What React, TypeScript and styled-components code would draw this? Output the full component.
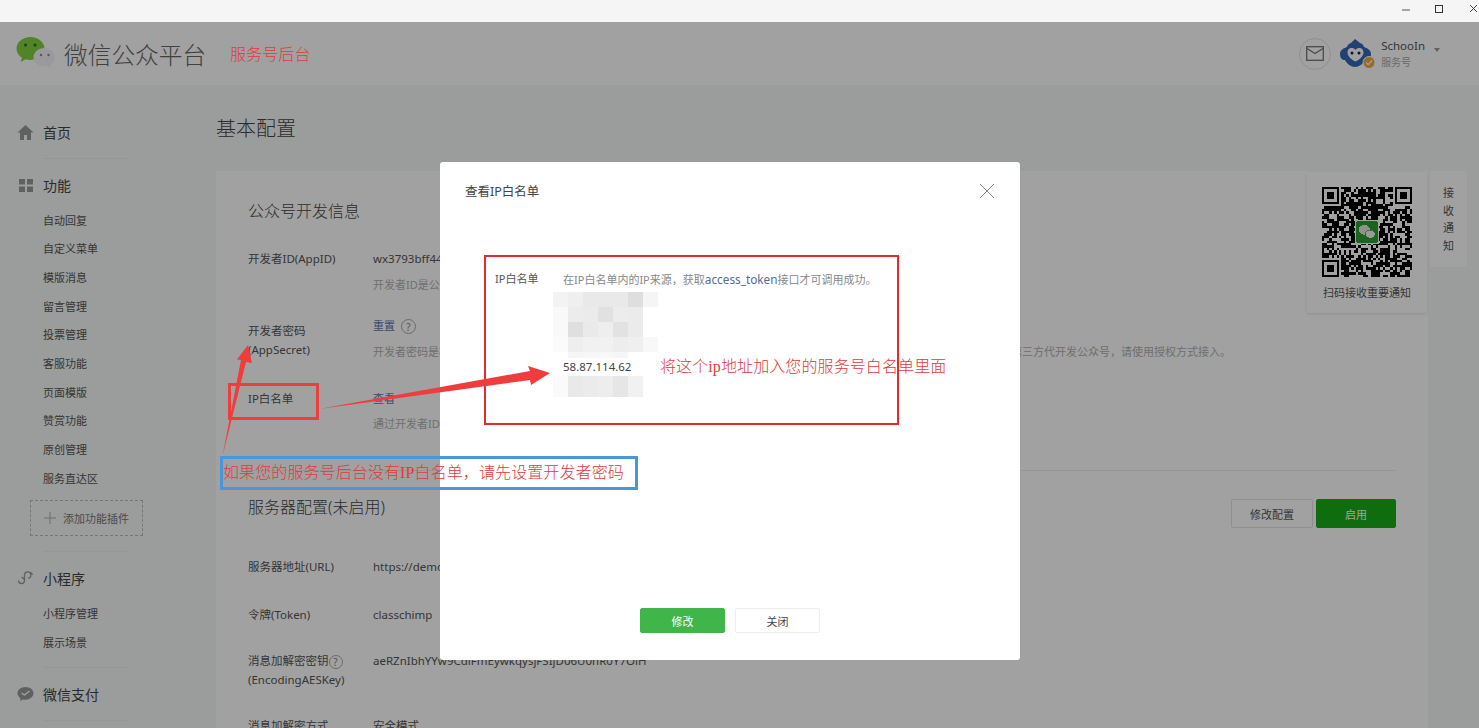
import React, { useMemo } from 'react';
import styled, { createGlobalStyle } from 'styled-components';

const SANS = `"Noto Sans", "Noto Sans CJK SC", sans-serif`;

const GlobalStyle = createGlobalStyle`
  html, body {
    margin: 0;
    height: 100%;
    overflow: hidden;
    background: #f6f8f7;
    font-family: ${SANS};
  }
  * { box-sizing: border-box; }
`;

const Page = styled.div`
  position: relative;
  width: 1479px;
  height: 728px;
  overflow: hidden;
`;

const TitleBar = styled.div`
  height: 22px;
  background: #f5f5f5;
  display: flex;
  justify-content: flex-end;
  align-items: center;
  color: #333;
`;

const WinIcon = styled.svg<{ $left: number; $right?: number }>`
  width: 12px;
  height: 12px;
  margin: -5px ${p => p.$right ?? 0}px 0 ${p => p.$left}px;
`;

const Header = styled.header`
  height: 63px;
  background: #fff;
  display: flex;
  align-items: center;
  padding: 0 39px 0 16px;
`;

const LogoText = styled.div`
  margin-left: 7px;
  font-size: 23.7px;
  font-weight: 300;
  color: #666;
`;

const HeaderRight = styled.div`
  margin-left: auto;
  display: flex;
  align-items: center;
`;

const MailButton = styled.div`
  width: 32px;
  height: 32px;
  border-radius: 50%;
  border: 1px solid #e4e4e4;
  display: flex;
  align-items: center;
  justify-content: center;
  margin-right: 9px;
`;

const Account = styled.div`
  margin-left: 5px;
  line-height: 16px;
`;

const AccountName = styled.div`
  font-size: 11.5px;
  color: #555;
`;

const AccountType = styled.div`
  font-size: 10px;
  color: #aaa;
`;

const Caret = styled.div`
  width: 0;
  height: 0;
  border: 3px solid transparent;
  border-top: 4px solid #999;
  margin: 0 0 5px 9px;
`;

const Body = styled.div`
  display: flex;
  height: 643px;
`;

const Sidebar = styled.nav`
  width: 216px;
  flex: none;
  padding-top: 33px;
`;

const NavTitle = styled.div`
  height: 28px;
  display: flex;
  align-items: center;
  gap: 9px;
  padding-left: 17px;
  font-size: 14px;
  color: #444;
`;

const NavIcon = styled.svg`
  width: 17px;
  height: 17px;
  flex: none;
`;

const NavList = styled.div<{ $top: number }>`
  margin-top: ${p => p.$top}px;
`;

const NavItem = styled.div`
  height: 28.7px;
  line-height: 28.7px;
  padding-left: 43px;
  font-size: 11px;
  color: #555;
`;

const NavDivider = styled.div<{ $top: number }>`
  width: 86px;
  height: 1px;
  margin: ${p => p.$top}px 0 12px 43px;
  background: #eeeeee;
`;

const AddPlugin = styled.div`
  width: 113px;
  height: 36px;
  margin: 6px 0 0 30px;
  border: 1px dashed #bbb;
  display: flex;
  align-items: center;
  gap: 7px;
  padding-left: 13px;
  font-size: 11px;
  color: #777;
`;

const Main = styled.main`
  position: relative;
  flex: 1;
  padding: 30px 51px 0 0;
  min-width: 0;
`;

const PageTitle = styled.h1`
  margin: 0 0 28px;
  font-size: 20px;
  font-weight: 300;
  line-height: 28px;
  color: #444;
`;

const Card = styled.section`
  height: 560px;
  background: #fff;
  padding: 28px 32px 0;
  overflow: hidden;
`;

const SectionTitle = styled.h2`
  margin: 0 0 26px;
  font-size: 16px;
  font-weight: 300;
  line-height: 24px;
  color: #444;
`;

const Row = styled.div<{ $h: number }>`
  display: flex;
  height: ${p => p.$h}px;
  font-size: 11.5px;
  line-height: 19px;
`;

const Label = styled.div<{ $top?: number }>`
  width: 125px;
  flex: none;
  margin-top: ${p => p.$top ?? 0}px;
  color: #555;
`;

const ValueCol = styled.div`
  min-width: 0;
  white-space: nowrap;
`;

const Value = styled.div`
  color: #555;
  font-size: 11.5px;
`;

const SecretLink = styled.span`
  color: #5d78a8;
  font-size: 11px;
`;

const Desc = styled.div<{ $gap?: number }>`
  margin-top: ${p => p.$gap ?? 7}px;
  color: #b0b0b0;
  font-size: 11px;
`;

const HelpMark = styled.span<{ $size: number }>`
  display: inline-flex;
  align-items: center;
  justify-content: center;
  vertical-align: middle;
  width: ${p => p.$size}px;
  height: ${p => p.$size}px;
  margin-left: 6px;
  border: 1px solid #aaa;
  border-radius: 50%;
  font-size: 10px;
  line-height: 1;
  color: #888;
`;

const InlineHelp = styled(HelpMark)`
  margin-left: 0;
`;

const CardDivider = styled.hr`
  margin: 0 0 28px;
  border: 0;
  border-top: 1px solid #eee;
`;

const SectionHead = styled.div`
  display: flex;
  justify-content: space-between;
  align-items: flex-start;
  height: 58px;
`;

const ServerTitle = styled(SectionTitle)`
  line-height: 17px;
  margin: 0;
`;

const HeadActions = styled.div`
  display: flex;
  gap: 3px;
`;

const PageButton = styled.button<{ $primary?: boolean }>`
  width: ${p => (p.$primary ? 80 : 82)}px;
  height: 29px;
  padding: 0;
  border-radius: 2px;
  border: 1px solid ${p => (p.$primary ? '#1aad19' : '#e2e2e2')};
  background: ${p => (p.$primary ? '#1aad19' : '#fff')};
  color: ${p => (p.$primary ? '#fff' : '#555')};
  font-family: ${SANS};
  font-size: 11px;
`;

const QrPanel = styled.aside`
  position: absolute;
  left: 1091px;
  top: 87px;
  width: 120px;
  height: 141px;
  background: #fff;
  border-radius: 2px;
  box-shadow: 0 1px 3px rgba(0, 0, 0, 0.12);
  display: flex;
  flex-direction: column;
  align-items: center;
  padding-top: 15px;
  font-size: 11px;
  color: #555;
`;

const QrCaption = styled.div`
  margin-top: 6px;
  line-height: 20px;
`;

const NoticeTab = styled.aside`
  position: absolute;
  left: 1214px;
  top: 86px;
  width: 37px;
  height: 96px;
  background: #fff;
  border-radius: 2px;
  padding-top: 13px;
  text-align: center;
  font-size: 11px;
  line-height: 17.5px;
  color: #555;
`;

const Overlay = styled.div`
  position: absolute;
  inset: 22px 0 0 0;
  background: rgba(0, 0, 0, 0.37);
  display: flex;
  justify-content: center;
  align-items: flex-start;
  padding: 140px 19px 0 0;
`;

const Dialog = styled.div`
  width: 580px;
  height: 498px;
  background: #fff;
  border-radius: 3px;
  display: flex;
  flex-direction: column;
`;

const DialogHead = styled.div`
  height: 58px;
  display: flex;
  align-items: center;
  justify-content: space-between;
  padding: 0 25px;
  font-size: 12.5px;
  color: #444;
`;

const DialogTitle = styled.div`
  margin-top: -2px;
`;

const DialogBody = styled.div`
  display: flex;
  padding: 49px 0 0 55px;
  font-size: 11px;
  line-height: 20px;
`;

const DialogLabel = styled.div`
  width: 68px;
  flex: none;
  color: #555;
`;

const Tip = styled.div`
  color: #888;
  white-space: nowrap;
`;

const TipLink = styled.span`
  color: #576b95;
  font-size: 11.8px;
`;

const Mosaic = styled.div<{ $h: number; $top: number }>`
  display: grid;
  grid-template-columns: repeat(7, 15px);
  grid-auto-rows: ${p => p.$h}px;
  margin: ${p => p.$top}px 0 0 -10px;
`;

const MosaicCell = styled.div<{ $c: string }>`
  background: ${p => p.$c};
`;

const IpText = styled.div`
  font-size: 11.5px;
  line-height: 18px;
  color: #444;
`;

const DialogFooter = styled.div`
  margin-top: auto;
  padding-bottom: 27px;
  display: flex;
  justify-content: center;
  gap: 10px;
`;

const DialogButton = styled.button<{ $primary?: boolean }>`
  width: 85px;
  height: 25px;
  padding: 0;
  border-radius: 2px;
  border: 1px solid ${p => (p.$primary ? '#3fb54a' : '#eeeeee')};
  background: ${p => (p.$primary ? '#3fb54a' : '#fff')};
  color: ${p => (p.$primary ? '#fff' : '#444')};
  font-family: ${SANS};
  font-size: 11px;
`;

/* things drawn on top of the screenshot afterwards */
const Markup = styled.div`
  position: absolute;
  inset: 0;
  pointer-events: none;
`;

const MarkBox = styled.div<{ $x: number; $y: number; $w: number; $h: number; $b: number; $c: string }>`
  position: absolute;
  left: ${p => p.$x}px;
  top: ${p => p.$y}px;
  width: ${p => p.$w}px;
  height: ${p => p.$h}px;
  border: ${p => p.$b}px solid ${p => p.$c};
`;

const MarkText = styled.div<{ $x: number; $y: number }>`
  position: absolute;
  left: ${p => p.$x}px;
  top: ${p => p.$y}px;
  font-family: "Liberation Serif", "Noto Sans CJK SC", serif;
  font-size: 16px;
  font-weight: 300;
  line-height: 20px;
  letter-spacing: 0.1px;
  color: #e03a3c;
  white-space: nowrap;
`;

const ArrowLayer = styled.svg`
  position: absolute;
  left: 0;
  top: 0;
`;

const navGroup = ['自动回复', '自定义菜单', '模版消息', '留言管理', '投票管理', '客服功能', '页面模版', '赞赏功能', '原创管理', '服务直达区'];

const mosaicTop = [
  ['#f3f3f3', '#efefef', '#e9e9e9', '#e9e9e9', '#e9e9e9', '#dedede', '#f5f5f5'],
  ['#f9f9f9', '#ececec', '#ebebeb', '#e1e1e1', '#ececec', '#ebebeb', '#ffffff'],
  ['#f9f9f9', '#dfdfdf', '#eaeaea', '#eeeeee', '#e2e2e2', '#ebebeb', '#ffffff'],
  ['#fbfbfb', '#eeeeee', '#f1f1f1', '#f1f1f1', '#ededed', '#efefef', '#f8f8f8'],
];

const mosaicFade = [['#ffffff', '#f5f5f5', '#f7f7f7', '#f8f8f8', '#f6f6f6', '#ffffff', '#ffffff']];

const mosaicBottom = [['#fafafa', '#e9e9e9', '#ebebeb', '#ededed', '#e6e6e6', '#f1f1f1', '#ffffff']];

function MosaicBlock({ rows, h, top }: { rows: string[][]; h: number; top: number }) {
  return (
    <Mosaic $h={h} $top={top}>
      {rows.flat().map((c, i) => (
        <MosaicCell key={i} $c={c} />
      ))}
    </Mosaic>
  );
}

function QrCode() {
  // modules are made up, only the look of a QR code matters here
  const d = useMemo(() => {
    const n = 37;
    let seed = 20417;
    const next = () => {
      seed = (seed * 1103515245 + 12345) & 0x7fffffff;
      return ((seed >> 16) & 7) < 5;
    };
    const inFinder = (x: number, y: number) => (x < 8 && y < 8) || (x > n - 9 && y < 8) || (x < 8 && y > n - 9);
    const finder = (ox: number, oy: number) =>
      `M${ox} ${oy}h7v7h-7zM${ox + 1} ${oy + 1}v5h5v-5zM${ox + 2} ${oy + 2}h3v3h-3z`;
    let out = finder(0, 0) + finder(n - 7, 0) + finder(0, n - 7);
    for (let y = 0; y < n; y++) {
      for (let x = 0; x < n; x++) {
        const bit = next();
        if (!inFinder(x, y) && bit) out += `M${x} ${y}h1v1h-1z`;
      }
    }
    return out;
  }, []);

  return (
    <svg width="90" height="90" viewBox="0 0 37 37" shapeRendering="crispEdges">
      <path d={d} fill="#000" fillRule="evenodd" />
      <rect x="13.5" y="13.5" width="10" height="10" fill="#fff" />
      <rect x="14" y="14" width="9" height="9" rx="1" fill="#2f9e34" />
      <ellipse cx="17.4" cy="17.6" rx="2.3" ry="2" fill="#dfe8dc" />
      <ellipse cx="19.9" cy="19.4" rx="2" ry="1.7" fill="#f3f6f1" stroke="#2f9e34" strokeWidth="0.3" />
    </svg>
  );
}

export default function App() {
  return (
    <Page>
      <GlobalStyle />
      <TitleBar>
        <WinIcon $left={0} viewBox="0 0 12 12">
          <path d="M0 7h8" stroke="#555" fill="none" />
        </WinIcon>
        <WinIcon $left={19} viewBox="0 0 12 12">
          <rect x="2.5" y="2.5" width="7" height="7" stroke="#333" fill="none" />
        </WinIcon>
        <WinIcon $left={24} $right={-2} viewBox="0 0 12 12">
          <path d="M1 2l7 7M8 2l-7 7" stroke="#444" fill="none" />
        </WinIcon>
      </TitleBar>

      <Header>
        <svg width="41" height="36" viewBox="0 0 41 36">
          <path d="M14.5 1C6.7 1 .5 6.2.5 12.6c0 3.8 2.2 7.1 5.5 9.2L4.6 26l5.1-2.7c1.500.4 3.100.6 4.800.6 7.800 0 14-5.200 14-11.300S22.300 1 14.500 1z" fill="#80d040" />
          <circle cx="9.500" cy="9" r="1.500" fill="#2f6d15" />
          <circle cx="19" cy="9" r="1.500" fill="#2f6d15" />
          <path d="M28.500 12c-6 0-11 4.100-11 9.300s5 9.300 11 9.300c1.200 0 2.400-.2 3.400-.500l3.500 2.700-.8-3.800c2.600-1.700 4.200-4.500 4.200-7.700 0-5.200-4.900-9.300-10.300-9.300z" fill="#f4f4fa" />
          <circle cx="25" cy="19" r="1.200" fill="#888" />
          <circle cx="32.500" cy="19" r="1.200" fill="#888" />
        </svg>
        <LogoText>微信公众平台</LogoText>
        <HeaderRight>
          <MailButton>
            <svg width="18" height="15" viewBox="0 0 18 15" fill="none" stroke="#777" strokeWidth="1.300">
              <rect x=".7" y=".7" width="16.600" height="13.600" />
              <path d="M1 2.500l8 5 8-5" />
            </svg>
          </MailButton>
          <svg width="36" height="30" viewBox="0 0 36 30">
            <path d="M15 0l5 4c2 .5 3.500 2 4 4 3 1 7 3 7 7 0 4-3 6-6 6-2 4-6 7-10 7s-8-3-10-7c-3 0-5-2-5-6s4-6 7-7c.5-2 2-3.500 4-4z" fill="#3566b8" />
            <path d="M15.500 11c1-1.500 2.500-2 4-2 2.500 0 4 2 4 4.500 0 3.500-3.500 7-8 9-4.500-2-8-5.500-8-9C7.500 11 9 9 11.500 9c1.500 0 3 .5 4 2z" fill="#fff" />
            <circle cx="12" cy="14" r="1.500" fill="#223" />
            <circle cx="19" cy="14" r="1.500" fill="#223" />
            <circle cx="29" cy="23.500" r="6" fill="#f2a94a" stroke="#fff" strokeWidth="1" />
            <path d="M26 23.500l2.200 2.200L32 21.500" stroke="#fff" fill="none" strokeWidth="1.200" />
          </svg>
          <Account>
            <AccountName>SchooIn</AccountName>
            <AccountType>服务号</AccountType>
          </Account>
          <Caret />
        </HeaderRight>
      </Header>

      <Body>
        <Sidebar>
          <NavTitle>
            <NavIcon viewBox="0 0 17 17">
              <path d="M8.500 1L.5 8.500h2.500V16h4v-5h3v5h4V8.500h2.500z" fill="#999" />
            </NavIcon>
            首页
          </NavTitle>
          <NavDivider $top={12} />
          <NavTitle>
            <NavIcon viewBox="0 0 17 17">
              <path d="M2 2h6v5.500H2zM10 2h6v5.500h-6zM2 9.500h6V15H2zM10 9.500h6V15h-6z" fill="#999" />
            </NavIcon>
            功能
          </NavTitle>
          <NavList $top={7.65}>
            {navGroup.map(item => (
              <NavItem key={item}>{item}</NavItem>
            ))}
          </NavList>
          <AddPlugin>
            <svg width="12" height="12" viewBox="0 0 12 12">
              <path d="M6 0v12M0 6h12" stroke="#aaa" />
            </svg>
            添加功能插件
          </AddPlugin>
          <NavDivider $top={15} />
          <NavTitle>
            <NavIcon viewBox="0 0 17 17" fill="none" stroke="#999" strokeWidth="1.300">
              <path d="M1.500 11.500a3 3 0 1 0 6 0V6a3.200 3.200 0 1 1 3.400 3.200" />
              <path d="M7.500 11.500a3 3 0 0 0-3-3" />
              <path d="M13 3.500a3 3 0 0 1 2.400 2.500" />
            </NavIcon>
            小程序
          </NavTitle>
          <NavList $top={8.65}>
            <NavItem>小程序管理</NavItem>
            <NavItem>展示场景</NavItem>
          </NavList>
          <NavDivider $top={9} />
          <NavTitle>
            <NavIcon viewBox="0 0 17 17">
              <path d="M8.500 2C4 2 .5 4.800.5 8.300c0 2 1.200 3.800 3 5L3 16l3-1.600c.8.200 1.600.3 2.500.3 4.500 0 8-2.900 8-6.400S13 2 8.500 2z" fill="#999" />
              <path d="M4.500 8l3 2 5-4" stroke="#fff" strokeWidth="1.300" fill="none" />
            </NavIcon>
            微信支付
          </NavTitle>
          <NavDivider $top={12} />
        </Sidebar>

        <Main>
          <PageTitle>基本配置</PageTitle>
          <Card>
            <SectionTitle>公众号开发信息</SectionTitle>
            <Row $h={67}>
              <Label>开发者ID(AppID)</Label>
              <ValueCol>
                <Value>wx3793bff44</Value>
                <Desc>开发者ID是公众号开发识别码，配合开发者密码可调用公众号的接口能力。</Desc>
              </ValueCol>
            </Row>
            <Row $h={73}>
              <Label $top={5}>
                开发者密码
                <br />
                (AppSecret)
              </Label>
              <ValueCol>
                <Value>
                  <SecretLink>重置</SecretLink>
                  <HelpMark $size={15}>?</HelpMark>
                </Value>
                <Desc>
                  开发者密码是校验公众号开发者身份的密码，具有极高的安全性。切记，勿把密码直接交给第三方开发者或直接存储在代码中。如需第三方代开发公众号，请使用授权方式接入。
                </Desc>
              </ValueCol>
            </Row>
            <Row $h={81}>
              <Label>IP白名单</Label>
              <ValueCol>
                <Value>
                  <SecretLink>查看</SecretLink>
                </Value>
                <Desc $gap={6}>通过开发者ID及密码调用获取access_token接口时，需要设置访问来源IP白名单。</Desc>
              </ValueCol>
            </Row>
            <CardDivider />
            <SectionHead>
              <ServerTitle>服务器配置(未启用)</ServerTitle>
              <HeadActions>
                <PageButton>修改配置</PageButton>
                <PageButton $primary>启用</PageButton>
              </HeadActions>
            </SectionHead>
            <Row $h={48}>
              <Label>服务器地址(URL)</Label>
              <Value>https://demo</Value>
            </Row>
            <Row $h={46}>
              <Label>令牌(Token)</Label>
              <Value>classchimp</Value>
            </Row>
            <Row $h={65}>
              <Label>
                消息加解密密钥<InlineHelp $size={14}>?</InlineHelp>
                <br />
                (EncodingAESKey)
              </Label>
              <Value>aeRZnIbhYYw9CdlFmEywkqysjFSIjD06U0nR0Y7OlH</Value>
            </Row>
            <Row $h={30}>
              <Label>消息加解密方式</Label>
              <Value>安全模式</Value>
            </Row>
          </Card>
          <QrPanel>
            <QrCode />
            <QrCaption>扫码接收重要通知</QrCaption>
          </QrPanel>
          <NoticeTab>
            接<br />收<br />通<br />知
          </NoticeTab>
        </Main>
      </Body>

      <Overlay>
        <Dialog>
          <DialogHead>
            <DialogTitle>查看IP白名单</DialogTitle>
            <svg width="16" height="16" viewBox="0 0 16 16">
              <path d="M1 1l14 14M15 1L1 15" stroke="#888" fill="none" />
            </svg>
          </DialogHead>
          <DialogBody>
            <DialogLabel>IP白名单</DialogLabel>
            <div>
              <Tip>
                在IP白名单内的IP来源，获取<TipLink>access_token</TipLink>接口才可调用成功。
              </Tip>
              <MosaicBlock rows={mosaicTop} h={15} top={2} />
              <MosaicBlock rows={mosaicFade} h={6} top={0} />
              <IpText>58.87.114.62</IpText>
              <MosaicBlock rows={mosaicBottom} h={21} top={0} />
            </div>
          </DialogBody>
          <DialogFooter>
            <DialogButton $primary>修改</DialogButton>
            <DialogButton>关闭</DialogButton>
          </DialogFooter>
        </Dialog>
      </Overlay>

      <Markup>
        <MarkText $x={230} $y={45}>服务号后台</MarkText>
        <MarkBox $x={228} $y={383} $w={91} $h={37} $b={3} $c="#ee3d3d" />
        <MarkBox $x={484} $y={255} $w={415} $h={170} $b={2} $c="#e52a2f" />
        <MarkBox $x={220} $y={456} $w={418} $h={34} $b={3} $c="#4a96d8" />
        <MarkText $x={223} $y={463}>如果您的服务号后台没有IP白名单，请先设置开发者密码</MarkText>
        <MarkText $x={660} $y={357}>将这个ip地址加入您的服务号白名单里面</MarkText>
        <ArrowLayer width="1479" height="728" viewBox="0 0 1479 728">
          <path d="M222.500 456L241 360 237 359.500 248 345 252 363 246 362z" fill="#f03c3c" />
          <path d="M319 409L530 371 528 366 550 373 531 385 530 380z" fill="#f03c3c" />
        </ArrowLayer>
      </Markup>
    </Page>
  );
}
